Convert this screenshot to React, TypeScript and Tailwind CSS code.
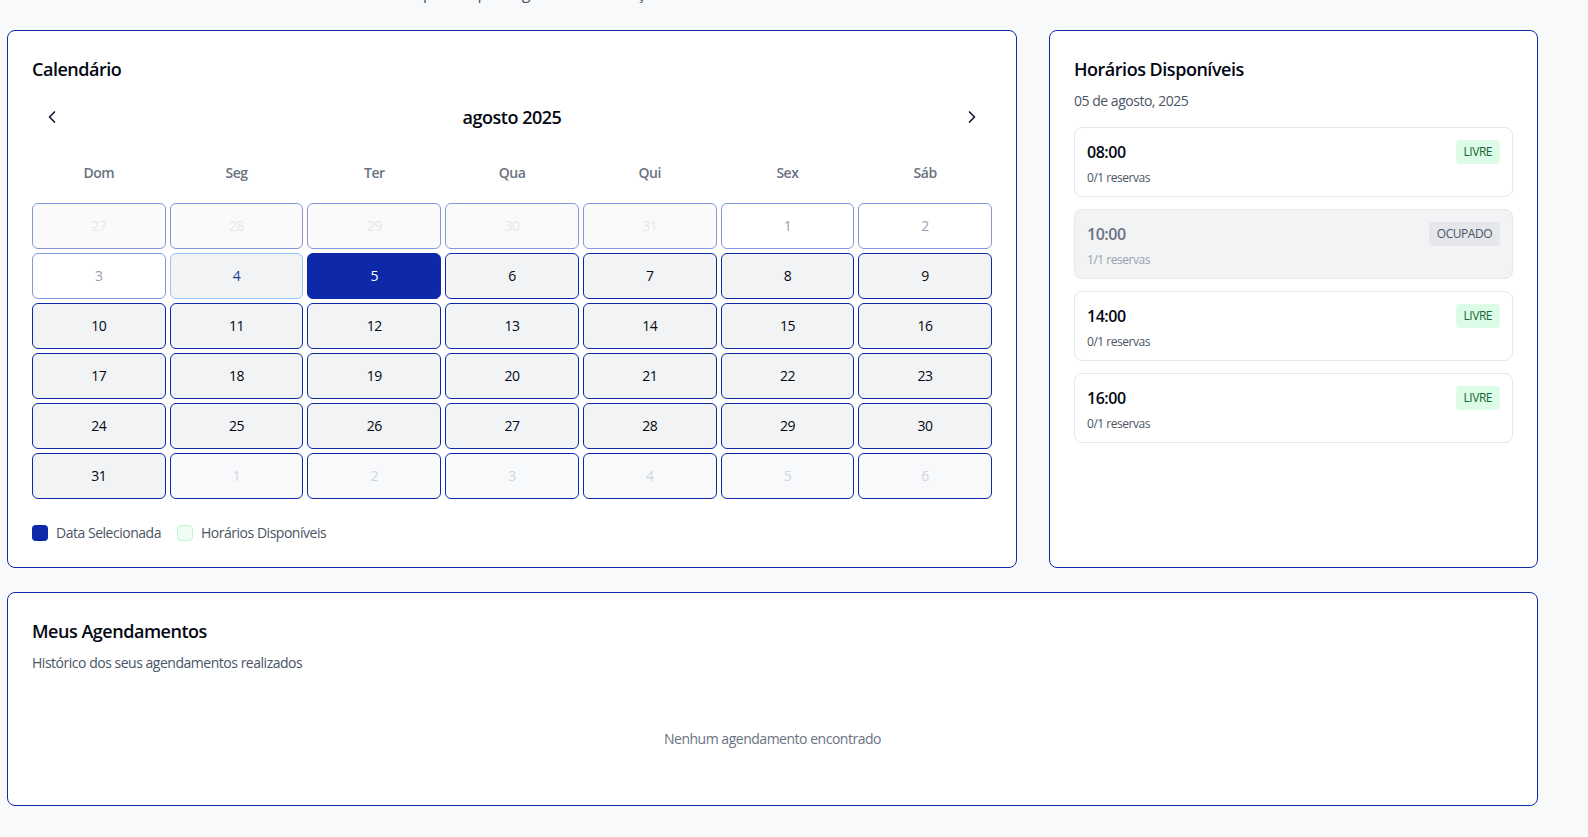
import React from "react";
import { ChevronLeft, ChevronRight } from "lucide-react";

type Kind = "prevMonth" | "past" | "today" | "selected" | "normal" | "nextMonth";

const cellClass: Record<Kind, string> = {
  prevMonth: "bg-[#fafafa] border-[#8795db] text-[#e5e7eb]",
  past: "bg-white border-[#8795db] text-gray-400",
  today: "bg-[#f2f3f5] border-[#93c5fd] text-[#1e3a8a]",
  selected: "bg-[#0d29aa] border-[#0d29aa] text-white",
  normal: "bg-[#f2f3f5] border-[#0d29aa] text-gray-950",
  nextMonth: "bg-[#f8f9fb] border-[#0d29aa] text-gray-300",
};

const days: { n: number; k: Kind }[] = [
  { n: 27, k: "prevMonth" },
  { n: 28, k: "prevMonth" },
  { n: 29, k: "prevMonth" },
  { n: 30, k: "prevMonth" },
  { n: 31, k: "prevMonth" },
  { n: 1, k: "past" },
  { n: 2, k: "past" },
  { n: 3, k: "past" },
  { n: 4, k: "today" },
  { n: 5, k: "selected" },
  ...Array.from({ length: 26 }, (_, i) => ({ n: i + 6, k: "normal" as Kind })),
  ...Array.from({ length: 6 }, (_, i) => ({ n: i + 1, k: "nextMonth" as Kind })),
];

const weekdays = ["Dom", "Seg", "Ter", "Qua", "Qui", "Sex", "Sáb"];

const slots = [
  { time: "08:00", res: "0/1 reservas", free: true },
  { time: "10:00", res: "1/1 reservas", free: false },
  { time: "14:00", res: "0/1 reservas", free: true },
  { time: "16:00", res: "0/1 reservas", free: true },
];

export default function App() {
  return (
    <div className="min-h-screen bg-[#f8f9fb] flex flex-col pl-[7px] overflow-hidden tracking-[-0.03em] [font-family:'Segoe_UI','Open_Sans',sans-serif]">
      <p className="-mt-[19px] h-6 text-base leading-6 text-gray-600 pl-[160px] whitespace-nowrap">
        Selecione uma data e um horário disponível para agendar seu serviço
      </p>

      <div className="w-[1531px] mt-[25px] grid grid-cols-3 gap-8">
        {/* Calendar card */}
        <div className="col-span-2 bg-white border border-[#0d29aa] rounded-lg p-6">
          <h2 className="text-lg leading-7 font-semibold text-gray-950">Calendário</h2>

          <div className="mt-[14px] h-10 flex items-center justify-between">
            <button className="w-10 h-10 flex items-center justify-center text-gray-900">
              <ChevronLeft className="w-5 h-5" strokeWidth={2} />
            </button>
            <div className="text-lg leading-7 font-semibold text-gray-950">agosto 2025</div>
            <button className="w-10 h-10 flex items-center justify-center text-gray-900">
              <ChevronRight className="w-5 h-5" strokeWidth={2} />
            </button>
          </div>

          <div className="mt-4 h-10 grid grid-cols-7 gap-1 items-center text-center text-sm font-semibold text-gray-500">
            {weekdays.map((d) => (
              <div key={d}>{d}</div>
            ))}
          </div>

          <div className="mt-[10px] grid grid-cols-7 gap-1">
            {days.map((d, i) => (
              <div
                key={i}
                className={`h-[46px] rounded-md border flex items-center justify-center text-sm ${cellClass[d.k]}`}
              >
                {d.n}
              </div>
            ))}
          </div>

          <div className="mt-6 flex items-center gap-4 text-sm leading-5 text-gray-600">
            <div className="flex items-center gap-2">
              <span className="w-4 h-4 rounded bg-[#0d29aa]" />
              <span>Data Selecionada</span>
            </div>
            <div className="flex items-center gap-2">
              <span className="w-4 h-4 rounded bg-[#f0fdf4] border border-[#bbf7d0]" />
              <span>Horários Disponíveis</span>
            </div>
          </div>
        </div>

        {/* Slots card */}
        <div className="bg-white border border-[#0d29aa] rounded-lg p-6">
          <h2 className="text-lg leading-7 font-semibold text-gray-950">Horários Disponíveis</h2>
          <p className="mt-2 text-sm leading-5 text-gray-600">05 de agosto, 2025</p>
          <div className="mt-4 flex flex-col gap-3">
            {slots.map((s) => (
              <div
                key={s.time}
                className={`rounded-lg border border-gray-200 px-3 pt-3 pb-[10px] flex justify-between items-start ${
                  s.free ? "bg-white" : "bg-[#f2f3f5]"
                }`}
              >
                <div>
                  <div className={`text-base leading-6 font-semibold ${s.free ? "text-gray-950" : "text-gray-500"}`}>
                    {s.time}
                  </div>
                  <div className={`mt-[6px] text-xs leading-4 ${s.free ? "text-gray-600" : "text-gray-400"}`}>{s.res}</div>
                </div>
                {s.free ? (
                  <span className="rounded px-2 py-1 text-xs leading-4 bg-[#dcfce7] text-[#166534]">LIVRE</span>
                ) : (
                  <span className="rounded px-2 py-1 text-xs leading-4 bg-[#e5e7eb] text-gray-600">OCUPADO</span>
                )}
              </div>
            ))}
          </div>
        </div>
      </div>

      {/* Bookings card */}
      <div className="w-[1531px] mt-6 bg-white border border-[#0d29aa] rounded-lg p-6">
        <h2 className="text-lg leading-7 font-semibold text-gray-950">Meus Agendamentos</h2>
        <p className="mt-2 text-sm leading-5 text-gray-600">Histórico dos seus agendamentos realizados</p>
        <div className="mt-6 py-8 text-center text-sm leading-5 text-gray-500">Nenhum agendamento encontrado</div>
      </div>
    </div>
  );
}
